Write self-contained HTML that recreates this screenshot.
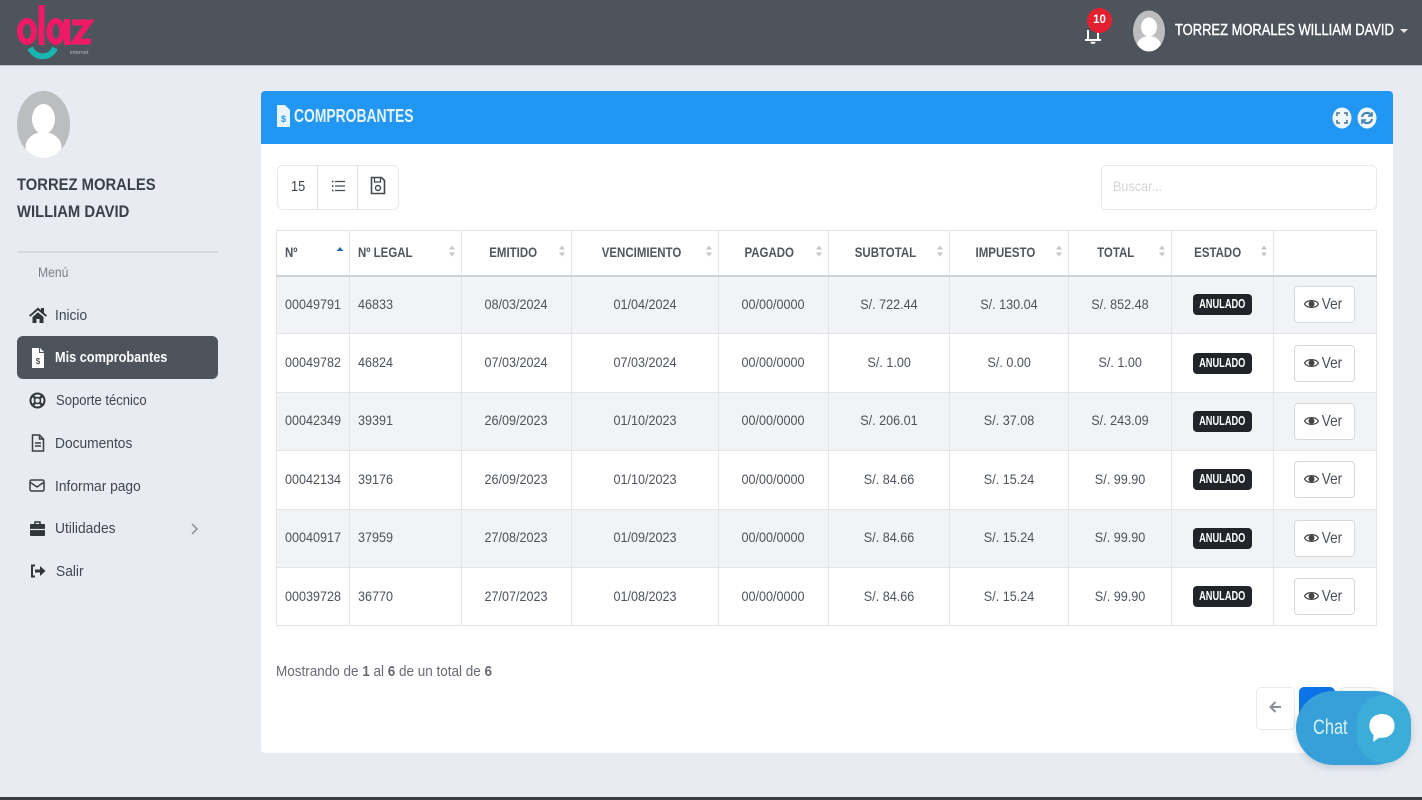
<!DOCTYPE html>
<html lang="es"><head><meta charset="utf-8"><title>Comprobantes</title>
<style>
*{box-sizing:border-box}
html,body{margin:0;padding:0;width:1422px;height:800px;overflow:hidden;background:#e8ebf1;font-family:"Liberation Sans",sans-serif;color:#4a5058}
#wrap{position:absolute;left:0;top:0;width:1422px;height:800px;filter:blur(.35px)}
.a{position:absolute}
i.s{display:inline-block;font-style:normal;transform:scaleX(.9);white-space:nowrap}
.t{position:absolute;white-space:nowrap;transform:scaleX(.9);transform-origin:0 50%;line-height:20px}
#top{left:0;top:0;width:1422px;height:66px;background:#4d545c;border-bottom:1px solid #b9bec6}
#card{left:261px;top:91px;width:1132px;height:662px;background:#fff;border-radius:4px}
#head{left:261px;top:91px;width:1132px;height:53px;background:#2196f3;border-radius:4px 4px 0 0}
#active{left:17px;top:336px;width:201px;height:43px;background:#4d545c;border-radius:6px}
.m{font-size:14.5px;color:#41474e;font-weight:400;transform:scaleX(.95)}
table{position:absolute;left:276px;top:230px;width:1100px;border-collapse:collapse;table-layout:fixed;font-size:14px;background:#fff}
th,td{border:1px solid #e2e4e8;padding:0;text-align:center;position:relative;color:#4d535a;font-weight:400}
th{height:45px;border-bottom:2px solid #cfd2d6;color:#50565c;font-weight:700;font-size:14px}
th i.s{transform:scaleX(.82)}
th>i.s,td>i.s{position:relative;top:-1px}
td.l,th.l{text-align:left;padding-left:8px}
.l i.s{transform-origin:0 50%}
tr.o td{background:#f2f3f5}
tbody tr{height:58.4px}
th svg{position:absolute;right:5px;top:14px}
.b{display:inline-block;width:59px;height:21px;line-height:21px;background:#212529;color:#fff;font-size:12.5px;font-weight:700;border-radius:4px;vertical-align:middle;text-align:center}
.b i.s{transform:scaleX(.74);margin:0 -10px}
.v{display:inline-block;width:61px;height:37px;border:1px solid #d5d8dc;border-radius:4px;background:#fff;line-height:36px;font-size:16px;color:#4a5058;vertical-align:middle;margin-left:-2px}
.v svg{vertical-align:-1px;margin-right:3px}
.v i.s{transform:scaleX(.85);margin-left:-2px}
</style></head><body><div id="wrap">
<div class="a" id="top"></div>
<svg class="a" style="left:0;top:0" width="100" height="66" viewBox="0 0 100 66">
<g fill="none" stroke="#ee1a66" stroke-width="6">
<ellipse cx="27" cy="31.500" rx="7" ry="10.500"/><path d="M41.500 5V45"/>
<ellipse cx="56" cy="31.500" rx="6.500" ry="10.500"/><path d="M67 19V45"/></g>
<path d="M72 22.500H89L75 41.500H91" fill="none" stroke="#ee1a66" stroke-width="6"/>
<path d="M30 48C36 59 50 59 55 48" fill="none" stroke="#19b5b0" stroke-width="6"/>
<text x="70" y="54" font-size="5.500" fill="#b5b9bd" font-family="Liberation Sans">internet</text>
</svg>
<svg class="a" style="left:1083px;top:20px" width="20" height="26" viewBox="0 0 20 26"><path d="M2 20h16M5 20V10M15 20V10M8 22a2.500 2.500 0 0 0 4 0" fill="none" stroke="#fff" stroke-width="2"/></svg>
<div class="a" style="left:1087px;top:8px;width:25px;height:25px;border-radius:50%;background:#e3202f;color:#fff;font-size:11.500px;font-weight:700;line-height:25px;text-align:center">10</div>
<svg class="a" style="left:1133px;top:10px" width="32" height="42" viewBox="0 0 32 42"><defs><clipPath id="c1"><ellipse cx="16" cy="21" rx="16" ry="20.500"/></clipPath></defs><ellipse cx="16" cy="21" rx="16" ry="20.500" fill="#bcbdbe"/><g clip-path="url(#c1)" fill="#fff"><ellipse cx="16" cy="17" rx="8" ry="9.500"/><ellipse cx="16" cy="36" rx="12" ry="10"/></g></svg>
<div class="t" style="left:1175px;top:21px;font-size:15.500px;font-weight:400;color:#fff;transform:scaleX(.835);-webkit-text-stroke:.4px #fff">TORREZ MORALES WILLIAM DAVID</div>
<div class="a" style="left:1400px;top:29px;border:4px solid transparent;border-top:4px solid #e8e8e8;border-bottom:0"></div>

<svg class="a" style="left:17px;top:91px" width="53" height="67" viewBox="0 0 53 67"><defs><clipPath id="c2"><ellipse cx="26.500" cy="33.500" rx="26.500" ry="33.500"/></clipPath></defs><ellipse cx="26.500" cy="33.500" rx="26.500" ry="33.500" fill="#bcbdbe"/><g clip-path="url(#c2)" fill="#fff"><ellipse cx="26.500" cy="28" rx="11.500" ry="15"/><ellipse cx="26.500" cy="56" rx="18" ry="15"/></g></svg>
<div class="t" style="left:17px;top:175px;font-size:17px;font-weight:700;color:#3b4148;transform:scaleX(.87)">TORREZ MORALES</div>
<div class="t" style="left:17px;top:202px;font-size:17px;font-weight:700;color:#3b4148;transform:scaleX(.87)">WILLIAM DAVID</div>
<div class="a" style="left:17px;top:251px;width:201px;height:2px;background:#d6d9de"></div>
<div class="t m" style="left:38px;top:263px;font-size:13.500px;color:#7b8087;transform:scaleX(.9)">Menú</div>
<div class="a" id="active"></div>

<svg class="a" style="left:29px;top:306px" width="18" height="18" viewBox="0 0 18 18"><path d="M0 9.500 9 1.500l3 2.600V2h3v4.700l3 2.800-1.200 1.300L9 4.300 1.200 10.800zM3.500 11 9 6.200 14.500 11v6h-4v-4h-3v4h-4z" fill="#30363c"/></svg>
<div class="t m" style="left:55px;top:306px">Inicio</div>
<svg class="a" style="left:31px;top:348px" width="14" height="20" viewBox="0 0 14 20"><path d="M1 0h7v5h5v15H1z" fill="#fff"/><path d="M9 0l4 4H9z" fill="#fff"/><text x="7" y="16" font-size="8" font-weight="700" fill="#4d545c" text-anchor="middle" font-family="Liberation Sans">$</text></svg>
<div class="t m" style="left:55px;top:348px;color:#fff;font-weight:700;transform:scaleX(.877)">Mis comprobantes</div>
<svg class="a" style="left:29px;top:392px" width="17" height="17" viewBox="0 0 17 17"><circle cx="8.500" cy="8.500" r="7" fill="none" stroke="#30363c" stroke-width="2"/><circle cx="8.500" cy="8.500" r="3" fill="none" stroke="#30363c" stroke-width="1.500"/><path d="M3 3l3 3M14 3l-3 3M3 14l3-3M14 14l-3-3" stroke="#30363c" stroke-width="2.500"/></svg>
<div class="t m" style="left:56px;top:391px;transform:scaleX(.9)">Soporte técnico</div>
<svg class="a" style="left:31px;top:434px" width="14" height="18" viewBox="0 0 14 18"><path d="M1.500 1h7l4 4v12h-11zM8.500 1v4h4M4 9h6M4 12h6" fill="none" stroke="#3a4046" stroke-width="1.500"/></svg>
<div class="t m" style="left:55px;top:434px">Documentos</div>
<svg class="a" style="left:29px;top:478px" width="16" height="15" viewBox="0 0 16 15"><rect x="1" y="2" width="14" height="11" rx="1.500" fill="none" stroke="#3a4046" stroke-width="1.500"/><path d="M1.500 4.500 8 9l6.500-4.500" fill="none" stroke="#3a4046" stroke-width="1.500"/></svg>
<div class="t m" style="left:55px;top:477px">Informar pago</div>
<svg class="a" style="left:29px;top:520px" width="17" height="17" viewBox="0 0 17 17"><path d="M6 4V2h5v2" fill="none" stroke="#30363c" stroke-width="1.500"/><rect x="1" y="4" width="15" height="12" rx="1" fill="#30363c"/><path d="M1 9.500h15" stroke="#e8ebf1" stroke-width="1.200"/></svg>
<div class="t m" style="left:55px;top:519px">Utilidades</div>
<svg class="a" style="left:190px;top:522px" width="9" height="14" viewBox="0 0 9 14"><path d="M2 2l5 5-5 5" fill="none" stroke="#8b9096" stroke-width="1.500"/></svg>
<svg class="a" style="left:30px;top:564px" width="16" height="14" viewBox="0 0 16 14"><path d="M5 1.500H2v11h3" fill="none" stroke="#30363c" stroke-width="2"/><path d="M5 5.500h5V2l5.500 5L10 12V8.500H5z" fill="#30363c"/></svg>
<div class="t m" style="left:56px;top:562px">Salir</div>

<div class="a" id="card"></div>
<div class="a" id="head"></div>
<svg class="a" style="left:276px;top:104px" width="15" height="24" viewBox="0 0 15 24"><path d="M1 1h8l5 5v17H1z" fill="#e9f5fe"/><text x="7.500" y="18" font-size="9" font-weight="700" fill="#2196f3" text-anchor="middle" font-family="Liberation Sans">$</text></svg>
<div class="t" style="left:294px;top:106px;font-size:18.500px;color:#e6f3fd;font-weight:700;transform:scaleX(.75)">COMPROBANTES</div>
<svg class="a" style="left:1332px;top:107px" width="46" height="22" viewBox="0 0 46 22"><ellipse cx="10" cy="11" rx="9.500" ry="10.500" fill="#eef7fe"/><path d="M5 9V6h3M12 6h3v3M15 13v3h-3M8 16H5v-3" fill="none" stroke="#4d6f8c" stroke-width="1.500"/><ellipse cx="35" cy="11" rx="9.500" ry="10.500" fill="#eef7fe"/><path d="M30 10a5 5 0 0 1 9-2M40 12a5 5 0 0 1-9 2" fill="none" stroke="#3f7fb0" stroke-width="2"/><path d="M40 5v4h-4M30 17v-4h4" fill="none" stroke="#3f7fb0" stroke-width="1.500"/></svg>

<div class="a" style="left:277px;top:165px;width:122px;height:45px;border:1px solid #e6e8eb;border-radius:6px;background:#fff"></div>
<div class="a" style="left:317px;top:165px;width:1px;height:45px;background:#dfe1e5"></div>
<div class="a" style="left:357px;top:165px;width:1px;height:45px;background:#dfe1e5"></div>
<div class="t" style="left:291px;top:177px;font-size:14.500px;color:#3d4349;transform:scaleX(.88)">15</div>
<svg class="a" style="left:331px;top:179px" width="14" height="14" viewBox="0 0 14 14"><path d="M4 2.500h10M4 7h10M4 11.500h10" stroke="#44494f" stroke-width="1.300"/><path d="M1 2.500h1.500M1 7h1.500M1 11.500h1.500" stroke="#44494f" stroke-width="1.800"/></svg>
<svg class="a" style="left:370px;top:176px" width="16" height="19" viewBox="0 0 16 19"><path d="M1.500 1.500h10l3 3v13h-13z" fill="none" stroke="#44494f" stroke-width="1.600"/><path d="M4.500 2v4h6V2" fill="none" stroke="#44494f" stroke-width="1.300"/><circle cx="8" cy="12" r="2.500" fill="none" stroke="#44494f" stroke-width="1.400"/></svg>
<div class="a" style="left:1101px;top:165px;width:276px;height:45px;border:1px solid #e6e8eb;border-radius:5px;background:#fff"></div>
<div class="t" style="left:1113px;top:176px;font-size:14px;color:#d2d4d8;transform:scaleX(.9)">Buscar...</div>

<table>
<colgroup><col style="width:73px"><col style="width:112px"><col style="width:110px"><col style="width:147px"><col style="width:110px"><col style="width:121px"><col style="width:119px"><col style="width:103px"><col style="width:102px"><col style="width:103px"></colgroup>
<thead><tr>
<th class="l"><i class="s">Nº</i><svg width="8" height="12" viewBox="0 0 8 12"><path d="M4 2l3.500 4H.5z" fill="#2a6aa8"/></svg></th>
<th class="l"><i class="s">Nº LEGAL</i><svg width="8" height="12" viewBox="0 0 8 12"><path d="M4 .5l3 4H1zM4 11.500l3-4H1z" fill="#c3c6ca"/></svg></th>
<th><i class="s" style="margin-right:6px">EMITIDO</i><svg width="8" height="12" viewBox="0 0 8 12"><path d="M4 .5l3 4H1zM4 11.500l3-4H1z" fill="#c3c6ca"/></svg></th>
<th><i class="s" style="margin-right:8px">VENCIMIENTO</i><svg width="8" height="12" viewBox="0 0 8 12"><path d="M4 .5l3 4H1zM4 11.500l3-4H1z" fill="#c3c6ca"/></svg></th>
<th><i class="s" style="margin-right:8px">PAGADO</i><svg width="8" height="12" viewBox="0 0 8 12"><path d="M4 .5l3 4H1zM4 11.500l3-4H1z" fill="#c3c6ca"/></svg></th>
<th><i class="s" style="margin-right:8px">SUBTOTAL</i><svg width="8" height="12" viewBox="0 0 8 12"><path d="M4 .5l3 4H1zM4 11.500l3-4H1z" fill="#c3c6ca"/></svg></th>
<th><i class="s" style="margin-right:8px">IMPUESTO</i><svg width="8" height="12" viewBox="0 0 8 12"><path d="M4 .5l3 4H1zM4 11.500l3-4H1z" fill="#c3c6ca"/></svg></th>
<th><i class="s" style="margin-right:8px">TOTAL</i><svg width="8" height="12" viewBox="0 0 8 12"><path d="M4 .5l3 4H1zM4 11.500l3-4H1z" fill="#c3c6ca"/></svg></th>
<th><i class="s" style="margin-right:10px">ESTADO</i><svg width="8" height="12" viewBox="0 0 8 12"><path d="M4 .5l3 4H1zM4 11.500l3-4H1z" fill="#c3c6ca"/></svg></th>
<th></th>
</tr></thead>
<tbody>
<tr class="o"><td class="l"><i class="s">00049791</i></td><td class="l"><i class="s">46833</i></td><td><i class="s">08/03/2024</i></td><td><i class="s">01/04/2024</i></td><td><i class="s">00/00/0000</i></td><td><i class="s">S/. 722.44</i></td><td><i class="s">S/. 130.04</i></td><td><i class="s">S/. 852.48</i></td><td><span class="b"><i class="s">ANULADO</i></span></td><td><span class="v"><svg width="15" height="12" viewBox="0 0 15 12"><path d="M.5 6C3 1.500 12 1.500 14.500 6 12 10.500 3 10.500 .5 6z" fill="none" stroke="#444" stroke-width="1.200"/><circle cx="7.500" cy="6" r="3" fill="#444"/></svg><i class="s">Ver</i></span></td></tr>
<tr><td class="l"><i class="s">00049782</i></td><td class="l"><i class="s">46824</i></td><td><i class="s">07/03/2024</i></td><td><i class="s">07/03/2024</i></td><td><i class="s">00/00/0000</i></td><td><i class="s">S/. 1.00</i></td><td><i class="s">S/. 0.00</i></td><td><i class="s">S/. 1.00</i></td><td><span class="b"><i class="s">ANULADO</i></span></td><td><span class="v"><svg width="15" height="12" viewBox="0 0 15 12"><path d="M.5 6C3 1.500 12 1.500 14.500 6 12 10.500 3 10.500 .5 6z" fill="none" stroke="#444" stroke-width="1.200"/><circle cx="7.500" cy="6" r="3" fill="#444"/></svg><i class="s">Ver</i></span></td></tr>
<tr class="o"><td class="l"><i class="s">00042349</i></td><td class="l"><i class="s">39391</i></td><td><i class="s">26/09/2023</i></td><td><i class="s">01/10/2023</i></td><td><i class="s">00/00/0000</i></td><td><i class="s">S/. 206.01</i></td><td><i class="s">S/. 37.08</i></td><td><i class="s">S/. 243.09</i></td><td><span class="b"><i class="s">ANULADO</i></span></td><td><span class="v"><svg width="15" height="12" viewBox="0 0 15 12"><path d="M.5 6C3 1.500 12 1.500 14.500 6 12 10.500 3 10.500 .5 6z" fill="none" stroke="#444" stroke-width="1.200"/><circle cx="7.500" cy="6" r="3" fill="#444"/></svg><i class="s">Ver</i></span></td></tr>
<tr><td class="l"><i class="s">00042134</i></td><td class="l"><i class="s">39176</i></td><td><i class="s">26/09/2023</i></td><td><i class="s">01/10/2023</i></td><td><i class="s">00/00/0000</i></td><td><i class="s">S/. 84.66</i></td><td><i class="s">S/. 15.24</i></td><td><i class="s">S/. 99.90</i></td><td><span class="b"><i class="s">ANULADO</i></span></td><td><span class="v"><svg width="15" height="12" viewBox="0 0 15 12"><path d="M.5 6C3 1.500 12 1.500 14.500 6 12 10.500 3 10.500 .5 6z" fill="none" stroke="#444" stroke-width="1.200"/><circle cx="7.500" cy="6" r="3" fill="#444"/></svg><i class="s">Ver</i></span></td></tr>
<tr class="o"><td class="l"><i class="s">00040917</i></td><td class="l"><i class="s">37959</i></td><td><i class="s">27/08/2023</i></td><td><i class="s">01/09/2023</i></td><td><i class="s">00/00/0000</i></td><td><i class="s">S/. 84.66</i></td><td><i class="s">S/. 15.24</i></td><td><i class="s">S/. 99.90</i></td><td><span class="b"><i class="s">ANULADO</i></span></td><td><span class="v"><svg width="15" height="12" viewBox="0 0 15 12"><path d="M.5 6C3 1.500 12 1.500 14.500 6 12 10.500 3 10.500 .5 6z" fill="none" stroke="#444" stroke-width="1.200"/><circle cx="7.500" cy="6" r="3" fill="#444"/></svg><i class="s">Ver</i></span></td></tr>
<tr><td class="l"><i class="s">00039728</i></td><td class="l"><i class="s">36770</i></td><td><i class="s">27/07/2023</i></td><td><i class="s">01/08/2023</i></td><td><i class="s">00/00/0000</i></td><td><i class="s">S/. 84.66</i></td><td><i class="s">S/. 15.24</i></td><td><i class="s">S/. 99.90</i></td><td><span class="b"><i class="s">ANULADO</i></span></td><td><span class="v"><svg width="15" height="12" viewBox="0 0 15 12"><path d="M.5 6C3 1.500 12 1.500 14.500 6 12 10.500 3 10.500 .5 6z" fill="none" stroke="#444" stroke-width="1.200"/><circle cx="7.500" cy="6" r="3" fill="#444"/></svg><i class="s">Ver</i></span></td></tr>
</tbody></table>

<div class="t" style="left:276px;top:662px;font-size:14.500px;color:#666b72;transform:scaleX(.93)">Mostrando de <b>1</b> al <b>6</b> de un total de <b>6</b></div>

<div class="a" style="left:1256px;top:687px;width:39px;height:43px;border:1px solid #e8eaed;border-radius:5px;background:#fff"></div>
<svg class="a" style="left:1269px;top:700px" width="13" height="14" viewBox="0 0 13 14"><path d="M12 7H2M6.500 2 1.500 7l5 5" fill="none" stroke="#8a8f95" stroke-width="2"/></svg>
<div class="a" style="left:1299px;top:687px;width:36px;height:43px;background:#0a74e8;border-radius:5px"></div>
<div class="a" style="left:1340px;top:687px;width:36px;height:43px;border:1px solid #e8eaed;border-radius:5px;background:#fff"></div>

<div class="a" style="left:1296px;top:691px;width:115px;height:74px;border-radius:37px;background:#38a0d9;box-shadow:0 2px 8px rgba(60,90,130,.25)"></div>
<div class="a" style="left:1357px;top:695px;width:54px;height:68px;border-radius:34px;background:#3cadd9"></div>
<div class="t" style="left:1313px;top:718px;font-size:21px;color:#d9f1fb;transform:scaleX(.78)">Chat</div>
<svg class="a" style="left:1368px;top:712px" width="28" height="31" viewBox="0 0 30 32"><path d="M15 1.500C23 1.500 28.500 6.500 28.500 14S23 27 15 27c-1.500 0-3 0-4 .5L5.500 31.500 6 24C3 21.500 1.500 18 1.500 14 1.500 6.500 7 1.500 15 1.500z" fill="#fff"/></svg>
<div class="a" style="left:0;top:797px;width:1422px;height:3px;background:#3a3e44"></div>
</div></body></html>
